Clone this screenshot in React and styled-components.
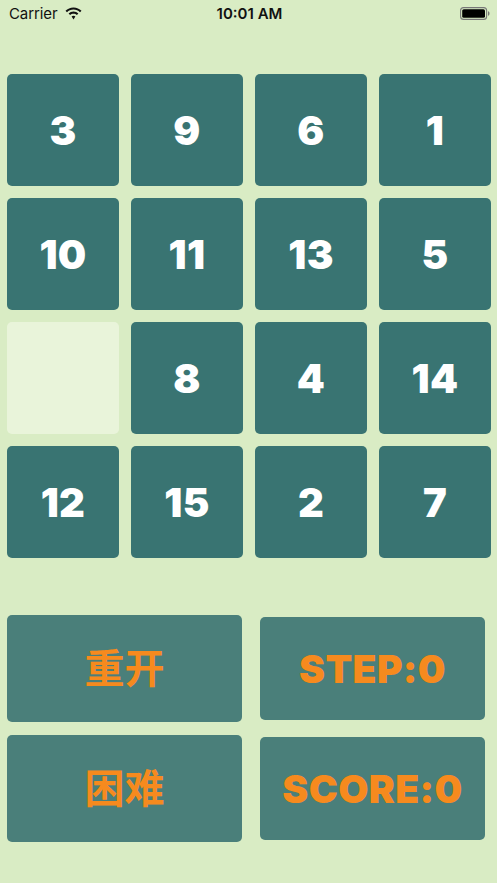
import styled, { createGlobalStyle } from "styled-components";

const GlobalStyle = createGlobalStyle`
  html, body {
    margin: 0;
    padding: 0;
    background: #d9ecc4;
  }
  body {
    font-family: "Inter", "Liberation Sans", "Noto Sans CJK SC", sans-serif;
  }
`;

const Screen = styled.div`
  width: 497px;
  height: 883px;
  background: #d9ecc4;
  display: flex;
  flex-direction: column;
  overflow: hidden;
`;

const StatusBar = styled.div`
  height: 26px;
  display: grid;
  grid-template-columns: 1fr auto 1fr;
  align-items: center;
  padding: 0 7px 0 9px;
  font-size: 15px;
  color: #111;
`;

const Carrier = styled.div`
  display: flex;
  align-items: center;
  gap: 8px;
  font-family: "Inter", "Liberation Sans", sans-serif;
  letter-spacing: -0.1px;
`;

const Clock = styled.div`
  font-weight: 600;
  font-size: 15px;
`;

const Battery = styled.div`
  justify-self: end;
  display: flex;
  align-items: center;
`;

const Board = styled.div`
  display: grid;
  grid-template-columns: repeat(4, 112px);
  grid-auto-rows: 112px;
  gap: 12px;
  padding: 48px 7px 0;
`;

const Tile = styled.div`
  border-radius: 5px;
  background: ${p => (p.$empty ? "#e9f4da" : "#397472")};
  color: #fff;
  display: flex;
  align-items: center;
  justify-content: center;
  font-family: "Inter", "Liberation Sans", sans-serif;
  font-weight: 900;
  font-size: 40px;
  letter-spacing: 0.3px;
`;

const Controls = styled.div`
  display: grid;
  grid-template-columns: 235px 225px;
  grid-auto-rows: 107px;
  column-gap: 18px;
  row-gap: 13px;
  padding: 57px 7px 0;
`;

const Button = styled.div`
  border-radius: 5px;
  background: #4a7f7a;
  color: #f68a1e;
  display: flex;
  align-items: center;
  justify-content: center;
  box-sizing: border-box;
  margin: ${p => (p.$inset ? "2px 0" : "0")};
  padding-bottom: ${p => (p.$cjk ? "6px" : "0")};
  font-family: ${p =>
    p.$cjk
      ? '"Noto Sans CJK SC", sans-serif'
      : '"Inter", "Liberation Sans", sans-serif'};
  font-weight: ${p => (p.$cjk ? 700 : 900)};
  font-size: ${p => (p.$cjk ? "40px" : "39px")};
  letter-spacing: ${p => (p.$cjk ? "0" : "0.4px")};
`;

const tiles = [3, 9, 6, 1, 10, 11, 13, 5, 0, 8, 4, 14, 12, 15, 2, 7];

function Wifi() {
  return (
    <svg width="17" height="13" viewBox="0 0 17 13">
      <path d="M8.5 0.5C5.3 0.5 2.5 1.8 0.5 3.8L2 5.3C3.7 3.6 6 2.6 8.5 2.6S13.3 3.6 15 5.3L16.5 3.8C14.5 1.8 11.7 0.5 8.5 0.5Z" fill="#111" />
      <path d="M8.5 4.6C6.6 4.6 4.9 5.4 3.6 6.6L5.1 8.1C6 7.2 7.2 6.7 8.5 6.7S11 7.2 11.9 8.1L13.4 6.6C12.1 5.4 10.4 4.6 8.5 4.6Z" fill="#111" />
      <path d="M8.5 8.7C7.7 8.7 7.1 9 6.6 9.5L8.5 12.5L10.4 9.5C9.9 9 9.3 8.7 8.5 8.7Z" fill="#111" />
    </svg>
  );
}

function BatteryIcon() {
  return (
    <svg width="30" height="13" viewBox="0 0 30 13">
      <rect x="0.6" y="0.6" width="26" height="11.8" rx="3" fill="none" stroke="#777" strokeWidth="1.1" />
      <rect x="2.2" y="2.2" width="22.8" height="8.6" rx="1.6" fill="#000" />
      <path d="M28 4.3C29 4.5 29.5 5.4 29.5 6.5S29 8.5 28 8.7Z" fill="#777" />
    </svg>
  );
}

export default function App() {
  return (
    <>
      <GlobalStyle />
      <Screen>
        <StatusBar>
          <Carrier>
            Carrier
            <Wifi />
          </Carrier>
          <Clock>10:01 AM</Clock>
          <Battery>
            <BatteryIcon />
          </Battery>
        </StatusBar>
        <Board>
          {tiles.map((n, i) => (
            <Tile key={i} $empty={n === 0}>
              {n === 0 ? "" : n}
            </Tile>
          ))}
        </Board>
        <Controls>
          <Button $cjk>重开</Button>
          <Button $inset>STEP:0</Button>
          <Button $cjk>困难</Button>
          <Button $inset>SCORE:0</Button>
        </Controls>
      </Screen>
    </>
  );
}
